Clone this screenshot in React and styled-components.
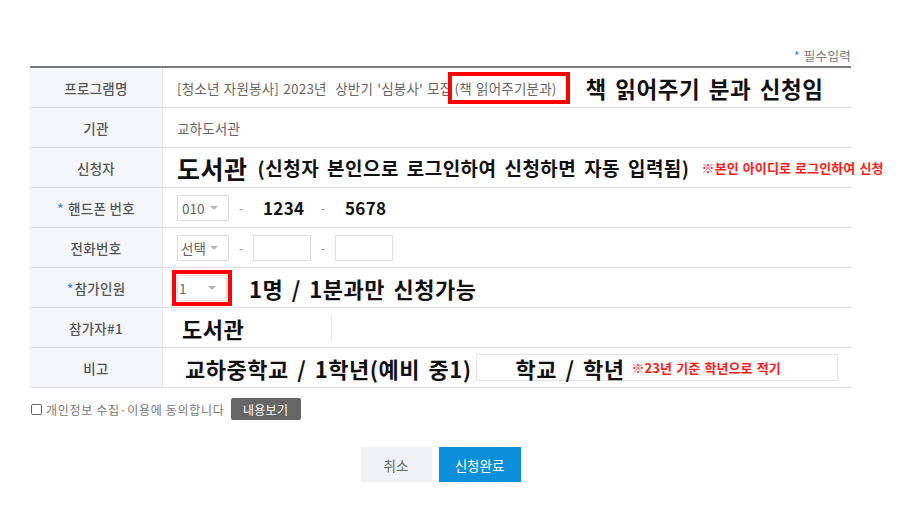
import React from 'react';
import styled, { createGlobalStyle } from 'styled-components';

const GlobalStyle = createGlobalStyle`
	body {
		margin: 0;
		background: #fff;
		font-family: "Noto Sans CJK KR", "Noto Sans", sans-serif;
	}
`;

const Page = styled.div`
	width: 821px;
	padding: 48px 0 0 30px;
`;

const RequiredNote = styled.div`
	height: 16px;
	line-height: 16px;
	margin-bottom: 2px;
	text-align: right;
	font-size: 12.5px;
	letter-spacing: 0.3px;
	color: #777;
`;

const Star = styled.span`
	color: #3a8ad0;
	margin-right: ${p => p.$gap || 4}px;
`;

const Table = styled.div`
	border-top: 2px solid #7d7d7d;
`;

const Row = styled.div`
	display: grid;
	grid-template-columns: 133px 1fr;
	height: 39px;
	border-bottom: 1px solid #dedede;
`;

const Label = styled.div`
	display: flex;
	align-items: center;
	justify-content: center;
	background: #f4f6f9;
	border-right: 1px solid #e2e4e8;
	font-size: 13.5px;
	letter-spacing: 0.3px;
	font-weight: 500;
	color: #555;
`;

const Cell = styled.div`
	display: flex;
	align-items: center;
	padding-left: 14px;
	white-space: nowrap;
	font-size: 13.5px;
	letter-spacing: 0.2px;
	word-spacing: 1px;
	color: #666;
`;

const Marked = styled.span`
	display: inline-flex;
	align-items: center;
	height: 24px;
	padding: 0 9px 0 2px;
	outline: 4px solid #ff0000;
	outline-offset: 0;
`;

const Big = styled.span`
	font-size: ${p => p.$size || 22}px;
	font-weight: 700;
	letter-spacing: 0.5px;
	word-spacing: 3px;
	color: #111;
	margin-left: ${p => p.$left || 0}px;
`;

const RedNote = styled.span`
	font-size: 13px;
	font-weight: 700;
	letter-spacing: 0.1px;
	word-spacing: 1px;
	color: #ff1a1a;
	margin-left: ${p => p.$left || 0}px;
`;

const Select = styled.div`
	position: relative;
	box-sizing: border-box;
	width: ${p => p.$w || 52}px;
	height: 26px;
	border: 1px solid #dcdcdc;
	padding-left: ${p => p.$pad ?? 4}px;
	line-height: 24px;
	font-size: 13.5px;
	letter-spacing: 0;
	color: #666;
	&::after {
		content: '';
		position: absolute;
		right: 10px;
		top: 10px;
		border-left: 4px solid transparent;
		border-right: 4px solid transparent;
		border-top: 4px solid #b5b5b5;
	}
`;

const Boxed = styled.div`
	outline: 4px solid #ff0000;
	outline-offset: 1px;
	display: flex;
`;

const Dash = styled.span`
	width: 24px;
	text-align: center;
	color: #999;
	font-size: 13px;
`;

const Field = styled.div`
	box-sizing: border-box;
	width: 58px;
	height: 26px;
	border: 1px solid ${p => (p.$bare ? 'transparent' : '#dcdcdc')};
	padding-left: 9px;
	line-height: 24px;
	font-size: 17px;
	font-weight: 700;
	letter-spacing: 0.3px;
	color: #111;
`;

const NameBox = styled.div`
	box-sizing: border-box;
	width: 161px;
	height: 28px;
	margin-left: -6px;
	padding-left: 11px;
	border-right: 1px solid #e6e6e6;
	display: flex;
	align-items: center;
`;

const NoteBox = styled.div`
	box-sizing: border-box;
	display: flex;
	align-items: center;
	width: 362px;
	height: 27px;
	margin-left: 4px;
	padding-left: 39px;
	border: 1px solid #e2e2e2;
`;

const Agree = styled.div`
	display: flex;
	align-items: center;
	margin-top: 10px;
	height: 22px;
	font-size: 12px;
	letter-spacing: 0.7px;
	color: #777;
`;

const Check = styled.span`
	box-sizing: border-box;
	width: 11px;
	height: 11px;
	margin: 0 4px 0 1px;
	border: 1px solid #666;
	border-radius: 2px;
`;

const SmallButton = styled.button`
	margin-left: 6px;
	height: 22px;
	width: 70px;
	border: 0;
	border-radius: 2px;
	background: #666;
	color: #fff;
	font-family: inherit;
	font-size: 12px;
	letter-spacing: 0.3px;
	padding: 0;
`;

const Actions = styled.div`
	display: flex;
	justify-content: center;
	gap: 7px;
	margin-top: 27px;
`;

const ActionButton = styled.button`
	height: 35px;
	width: ${p => (p.$primary ? 82 : 71)}px;
	border: 0;
	padding: 0;
	background: ${p => (p.$primary ? '#0b8fda' : '#f1f2f5')};
	color: ${p => (p.$primary ? '#fff' : '#666')};
	font-family: inherit;
	font-size: 13.5px;
`;

const App = () => {
	return (
		<Page>
			<GlobalStyle />
			<RequiredNote><Star>*</Star>필수입력</RequiredNote>
			<Table>
				<Row>
					<Label>프로그램명</Label>
					<Cell>
						[청소년 자원봉사] 2023년 &nbsp;상반기 '심봉사' 모집
						<Marked>(책 읽어주기분과)</Marked>
						<Big $size={22.5} $left={20}>책 읽어주기 분과 신청임</Big>
					</Cell>
				</Row>
				<Row>
					<Label>기관</Label>
					<Cell>교하도서관</Cell>
				</Row>
				<Row>
					<Label>신청자</Label>
					<Cell>
						<Big $size={25}>도서관</Big>
						<Big $size={19} $left={10}>(신청자 본인으로 로그인하여 신청하면 자동 입력됨)</Big>
						<RedNote $left={12}>※본인 아이디로 로그인하여 신청</RedNote>
					</Cell>
				</Row>
				<Row>
					<Label><Star>*</Star>핸드폰 번호</Label>
					<Cell>
						<Select>010</Select>
						<Dash>-</Dash>
						<Field $bare>1234</Field>
						<Dash>-</Dash>
						<Field $bare>5678</Field>
					</Cell>
				</Row>
				<Row>
					<Label>전화번호</Label>
					<Cell>
						<Select $pad={3}>선택</Select>
						<Dash>-</Dash>
						<Field />
						<Dash>-</Dash>
						<Field />
					</Cell>
				</Row>
				<Row>
					<Label><Star $gap={1}>*</Star>참가인원</Label>
					<Cell>
						<Boxed><Select $w={50} $pad={1}>1</Select></Boxed>
						<Big $left={22}>1명 / 1분과만 신청가능</Big>
					</Cell>
				</Row>
				<Row>
					<Label>참가자#1</Label>
					<Cell>
						<NameBox><Big>도서관</Big></NameBox>
					</Cell>
				</Row>
				<Row>
					<Label>비고</Label>
					<Cell>
						<Big $left={8}>교하중학교 / 1학년(예비 중1)</Big>
						<NoteBox>
							<Big>학교 / 학년</Big>
							<RedNote $left={7}>※23년 기준 학년으로 적기</RedNote>
						</NoteBox>
					</Cell>
				</Row>
			</Table>
			<Agree>
				<Check />
				개인정보 수집·이용에 동의합니다
				<SmallButton>내용보기</SmallButton>
			</Agree>
			<Actions>
				<ActionButton>취소</ActionButton>
				<ActionButton $primary>신청완료</ActionButton>
			</Actions>
		</Page>
	);
};

export default App;
